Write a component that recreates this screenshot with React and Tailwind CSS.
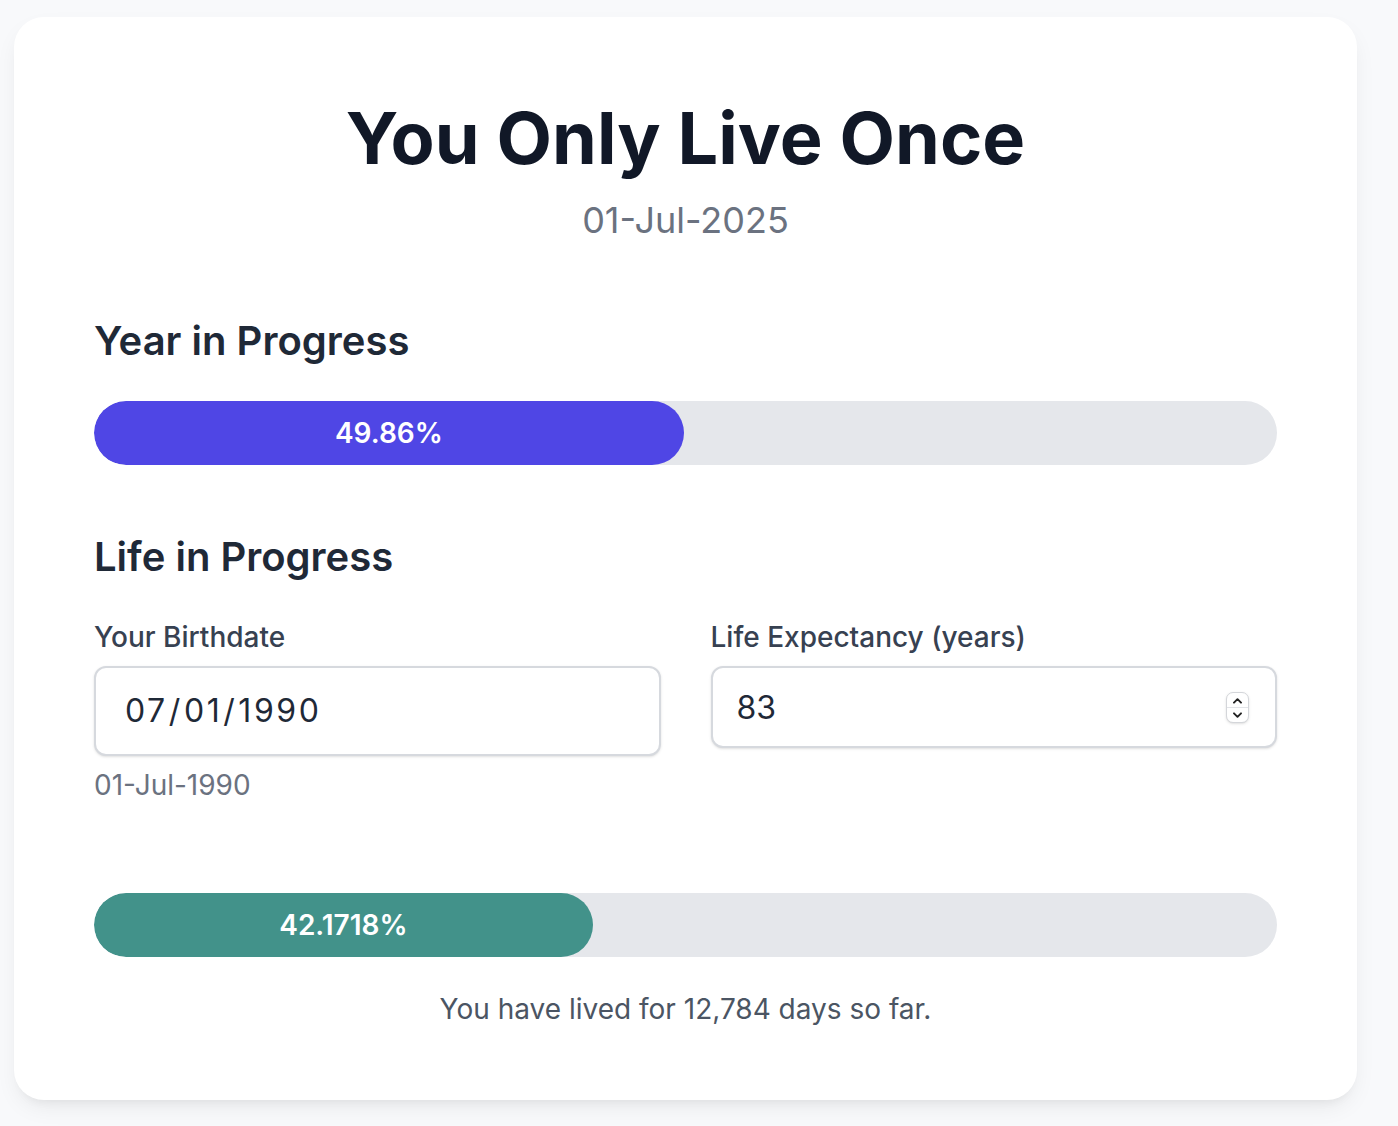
import { useState } from 'react';

const ProgressBar = ({ value, label, fill }) => (
  <div className="w-full h-[64px] rounded-full bg-[#e5e7eb] overflow-hidden">
    <div
      className={`h-full rounded-full flex items-center justify-center ${fill}`}
      style={{ width: `${value}%` }}
    >
      <span className="text-white text-[28px] font-semibold leading-none">{label}</span>
    </div>
  </div>
);

export default function App() {
  const [birthdate, setBirthdate] = useState('1990-07-01');
  const [expectancy, setExpectancy] = useState(83);

  return (
    <div
      className="min-h-screen bg-[#f8f9fb] pt-[17px] pl-[14px] pb-[26px]"
      style={{ fontFamily: 'Inter, "Noto Sans", sans-serif' }}
    >
      <div className="w-[1343px] bg-white rounded-[30px] shadow-[0_10px_25px_-5px_rgba(0,0,0,0.08),0_8px_10px_-6px_rgba(0,0,0,0.05)] px-[80px] pt-[85px] pb-[73px]">
        {/* Cabecera */}
        <div className="flex flex-col items-center">
          <h1 className="text-[72px] leading-[72px] font-bold text-[#111827]">
            You Only Live Once
          </h1>
          <p className="mt-[26px] text-[36px] leading-[40px] text-[#6b7280]">01-Jul-2025</p>
        </div>

        {/* Año */}
        <h2 className="mt-[77px] text-[40px] leading-[48px] font-semibold text-[#1f2937]">
          Year in Progress
        </h2>
        <div className="mt-[36px]">
          <ProgressBar value={49.86} label="49.86%" fill="bg-[#4f46e5]" />
        </div>

        {/* Vida */}
        <h2 className="mt-[68px] text-[40px] leading-[48px] font-semibold text-[#1f2937]">
          Life in Progress
        </h2>
        <div className="mt-[38px] grid grid-cols-2 gap-[50px]">
          <div className="flex flex-col">
            <label className="text-[28px] leading-[36px] font-medium text-[#374151]">
              Your Birthdate
            </label>
            <input
              type="date"
              value={birthdate}
              onChange={(e) => setBirthdate(e.target.value)}
              className="mt-[11px] h-[90px] w-full rounded-[12px] border-2 border-[#d6d9de] bg-white pl-[28px] pr-6 text-[32px] tracking-[0.08em] text-[#1f2937] shadow-sm outline-none [&::-webkit-calendar-picker-indicator]:hidden"
            />
            <p className="mt-[11px] text-[28px] leading-[36px] text-[#6b7280]">01-Jul-1990</p>
          </div>
          <div className="flex flex-col">
            <label className="text-[28px] leading-[36px] font-medium text-[#374151]">
              Life Expectancy (years)
            </label>
            <div className="relative mt-[11px]">
              <input
                type="number"
                value={expectancy}
                onChange={(e) => setExpectancy(e.target.value)}
                className="h-[82px] w-full rounded-[12px] border-2 border-[#d6d9de] bg-white pl-[24px] pr-6 text-[32px] text-[#1f2937] shadow-sm outline-none [appearance:textfield] [&::-webkit-inner-spin-button]:appearance-none [&::-webkit-outer-spin-button]:appearance-none"
              />
              {/* stepper */}
              <div className="absolute right-[28px] top-[26px] w-[23px] h-[31px] rounded-[7px] border border-[#d4d6da] bg-white shadow-sm flex flex-col overflow-hidden pointer-events-none">
                <div className="flex-1 flex items-center justify-center border-b border-[#e2e4e8]">
                  <svg viewBox="0 0 12 8" className="w-[11px] h-[7px]" fill="none" stroke="#222" strokeWidth="2.2" strokeLinecap="round" strokeLinejoin="round">
                    <path d="M2 6.5 6 2.5l4 4" />
                  </svg>
                </div>
                <div className="flex-1 flex items-center justify-center">
                  <svg viewBox="0 0 12 8" className="w-[11px] h-[7px]" fill="none" stroke="#222" strokeWidth="2.2" strokeLinecap="round" strokeLinejoin="round">
                    <path d="M2 1.5 6 5.5l4-4" />
                  </svg>
                </div>
              </div>
            </div>
          </div>
        </div>

        <div className="mt-[90px]">
          <ProgressBar value={42.1718} label="42.1718%" fill="bg-[#42928a]" />
        </div>
        <p className="mt-[34px] text-center text-[28px] leading-[36px] text-[#4b5563]">
          You have lived for 12,784 days so far.
        </p>
      </div>
    </div>
  );
}
